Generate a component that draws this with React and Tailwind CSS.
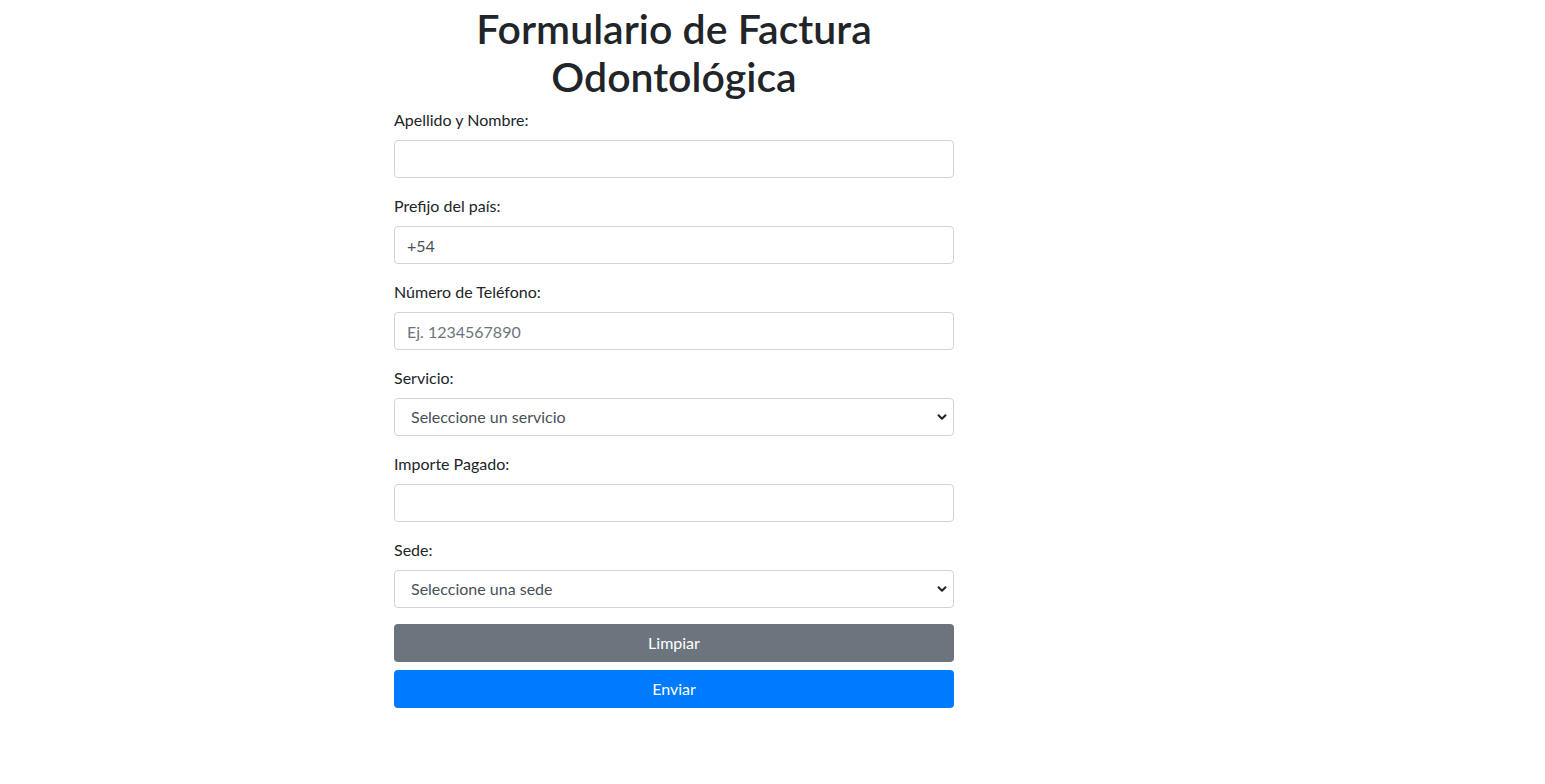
import { ChevronDown } from 'lucide-react';

const font = { fontFamily: 'Lato, "Noto Sans", sans-serif' };

function Field({ label, children }) {
    return (
        <div className="mb-4">
            <label className="block mb-2 text-base leading-6 text-[#212529]">{label}</label>
            {children}
        </div>
    );
}

const inputCls =
    'block w-full h-[38px] px-3 text-base text-[#495057] bg-white border border-[#ced4da] rounded-[4px] outline-none placeholder:text-[#6c757d]';

function Select({ placeholder }) {
    return (
        <div className="relative">
            <select className={inputCls + ' appearance-none pl-4'} defaultValue="">
                <option value="" disabled>{placeholder}</option>
            </select>
            <ChevronDown className="absolute right-[5px] top-1/2 -translate-y-1/2 h-[14px] w-[14px] text-[#212529] pointer-events-none" strokeWidth={3.5} />
        </div>
    );
}

export default function App() {
    return (
        <div className="min-h-[784px] bg-white" style={font}>
            <div className="ml-[394px] w-[560px]">
                {/* Title */}
                <h1 className="pt-[5px] mb-[7px] text-center text-[41px] leading-[48px] font-semibold text-[#212529]">
                    Formulario de Factura Odontológica
                </h1>

                <form onSubmit={(e) => e.preventDefault()}>
                    <Field label="Apellido y Nombre:">
                        <input type="text" className={inputCls} />
                    </Field>
                    <Field label="Prefijo del país:">
                        <input type="text" className={inputCls} defaultValue="+54" />
                    </Field>
                    <Field label="Número de Teléfono:">
                        <input type="tel" className={inputCls} placeholder="Ej. 1234567890" />
                    </Field>
                    <Field label="Servicio:">
                        <Select placeholder="Seleccione un servicio" />
                    </Field>
                    <Field label="Importe Pagado:">
                        <input type="number" className={inputCls} />
                    </Field>
                    <Field label="Sede:">
                        <Select placeholder="Seleccione una sede" />
                    </Field>

                    <button type="reset" className="block w-full h-[38px] mb-2 text-base text-white bg-[#6c757d] rounded-[4px]">
                        Limpiar
                    </button>
                    <button type="submit" className="block w-full h-[38px] text-base text-white bg-[#007bff] rounded-[4px]">
                        Enviar
                    </button>
                </form>
            </div>
        </div>
    );
}
